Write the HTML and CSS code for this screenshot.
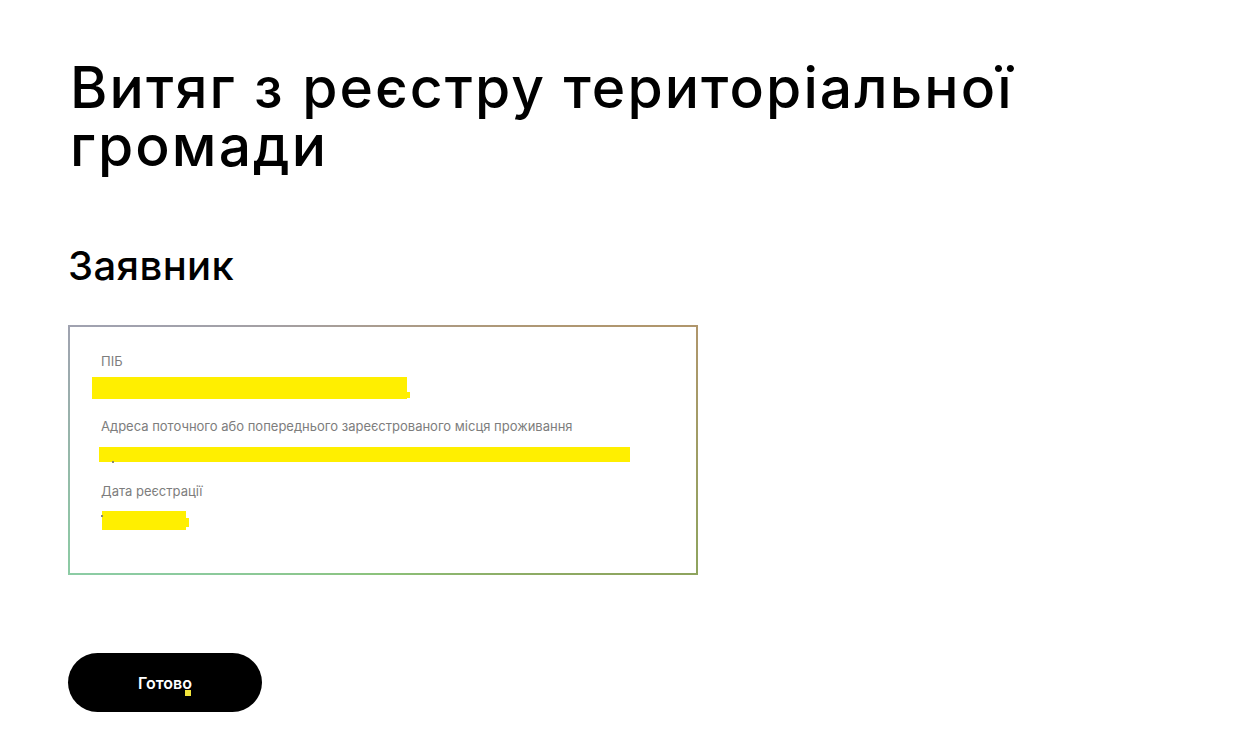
FILE: index.html
```html
<!DOCTYPE html>
<html lang="uk">
<head>
<meta charset="utf-8">
<link rel="stylesheet" href="styles.css">
</head>
<body>
<main class="page">
  <h1 class="title">Витяг з реєстру територіальної громади</h1>
  <h2 class="subtitle">Заявник</h2>
  <section class="card">
    <div class="field">
      <div class="label">ПІБ</div>
      <div class="value"><span class="mark mark-name"></span><span class="nub nub-name"></span></div>
    </div>
    <div class="field">
      <div class="label">Адреса поточного або попереднього зареєстрованого місця проживання</div>
      <div class="value"><span class="mark mark-addr"></span><span class="speck speck-addr"></span></div>
    </div>
    <div class="field">
      <div class="label">Дата реєстрації</div>
      <div class="value"><span class="mark mark-date"></span><span class="nub nub-date"></span><span class="speck speck-date"></span></div>
    </div>
  </section>
  <button class="btn">Готово<span class="btn-dot"></span></button>
</main>
</body>
</html>
```

FILE: styles.css
```css
* { box-sizing: border-box; }
html, body { margin: 0; padding: 0; background: #fff; }
body { font-family: Inter, "Noto Sans", sans-serif; color: #000; }
.page { padding: 59px 0 0 68px; display: flex; flex-direction: column; align-items: flex-start; }
.title {
  margin: 0 0 0 2px;
  font-size: 57px;
  font-weight: 500;
  line-height: 58px;
  letter-spacing: 2.1px;
  width: 1060px;
}
.subtitle {
  margin: 69px 0 0 0;
  font-size: 40px;
  font-weight: 500;
  line-height: 44px;
  letter-spacing: 0.4px;
}
.card {
  margin-top: 37px;
  width: 630px;
  height: 250px;
  border: 2px solid transparent;
  background:
    linear-gradient(#fff, #fff) padding-box,
    conic-gradient(from 0deg at 50% 50%,
      #aa9c8e 0deg, #b0966c 68deg, #8ea45e 112deg, #8cc27a 180deg,
      #8ccca4 248deg, #a0a2b0 292deg, #aa9c8e 360deg) border-box;
  padding: 26px 0 0 31px;
  display: flex;
  flex-direction: column;
}
.field { height: 65px; }
.label {
  font-size: 13px;
  color: #7d7d7d;
  line-height: 16px;
}
.value { position: relative; height: 49px; }
.mark, .nub, .speck { display: block; position: absolute; }
.mark, .nub { background: #ffef00; }
.speck { width: 2px; height: 2px; background: #8a8a70; }
.mark-name { left: -9px; top: 8px; width: 315px; height: 22px; }
.nub-name { left: 306px; top: 23px; width: 3px; height: 6px; }
.mark-addr { left: -2px; top: 13px; width: 531px; height: 15px; }
.speck-addr { left: 11px; top: 27px; }
.mark-date { left: 1px; top: 12px; width: 84px; height: 19px; }
.nub-date { left: 84px; top: 19px; width: 4px; height: 9px; }
.speck-date { left: 0px; top: 16px; }
.btn {
  margin-top: 78px;
  width: 194px;
  height: 59px;
  border: none;
  border-radius: 30px;
  background: #000;
  color: #fff;
  font-family: Inter, "Noto Sans", sans-serif;
  font-size: 16px;
  font-weight: 600;
  position: relative;
  padding: 0;
}
.btn-dot {
  position: absolute;
  left: 117px;
  top: 37px;
  width: 6px;
  height: 6px;
  background: #f2e53c;
}
```
